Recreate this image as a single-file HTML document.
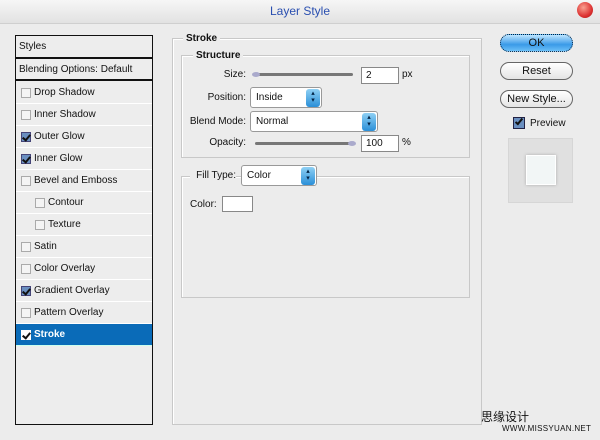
<!DOCTYPE html>
<html><head><meta charset="utf-8"><style>
*{margin:0;padding:0;box-sizing:border-box}
body{width:600px;height:440px;background:#ececec;font-family:"Liberation Sans",Arial,sans-serif;font-size:10px;color:#111;position:relative;overflow:hidden}
.a{position:absolute}
#title{left:0;top:0;width:600px;height:24px;background:linear-gradient(#f6f6f6,#e2e2e2);border-bottom:1px solid #cfcfcf;text-align:center;line-height:22px;font-size:12px;color:#2a4fb0}
#close{left:577px;top:2px;width:16px;height:16px;border-radius:50%;background:radial-gradient(circle at 40% 35%,#f9a090,#d33 60%,#a11)}
#list{left:15px;top:35px;width:138px;height:390px;border:1px solid #111;background:#ededed}
.row{position:absolute;left:0;width:136px;height:22px;border-bottom:1px solid #fff;line-height:21px;padding-left:18px}
.cb{position:absolute;left:5px;top:6px;width:10px;height:10px;border:1px solid #aaa;background:#f4f4f4}
.cb.on{border-color:#447;background:#6a8fc0}
.cb.on::after{content:"";position:absolute;left:2px;top:0;width:3px;height:6px;border:solid #111;border-width:0 2px 2px 0;transform:rotate(40deg)}
.box{position:absolute;border:1px solid #c8c8c8;box-shadow:inset 1px 1px 0 #fff}
.lbl{position:absolute;font-size:10px;text-align:right}
.inp{position:absolute;background:#fff;border:1px solid #888;height:17px;line-height:15px;padding-left:4px}
.sel{position:absolute;background:#fff;border:1px solid #999;border-radius:3px;height:21px;line-height:19px;padding-left:5px}
.sel::after{content:"▴\A▾";white-space:pre;position:absolute;right:1px;top:1px;width:14px;height:17px;border-radius:3px;background:linear-gradient(#8fd0f4,#2a8fd8);font-size:7px;line-height:7px;text-align:center;color:#024;padding-top:1px}
.slider{position:absolute;height:3px;background:#777;border-radius:2px}
.knob{position:absolute;width:8px;height:5px;border-radius:50%;background:#aac}
.btn{position:absolute;left:500px;width:73px;height:18px;border:1px solid #666;border-radius:9px;background:linear-gradient(#fff,#e4e4e4);text-align:center;line-height:16px;font-size:11px}
.h{position:absolute;font-weight:bold;font-size:10px;background:#ececec;padding:0 3px}
</style></head><body>
<div id="title" class="a">Layer Style</div>
<div id="close" class="a"></div>

<div id="list" class="a">
<div class="row" style="top:0;height:23px;padding-left:3px;border-bottom:2px solid #111">Styles</div>
<div class="row" style="top:23px;padding-left:3px;border-bottom:2px solid #111">Blending Options: Default</div>
<div class="row" style="top:46px"><span class="cb"></span>Drop Shadow</div>
<div class="row" style="top:68px"><span class="cb"></span>Inner Shadow</div>
<div class="row" style="top:90px"><span class="cb on"></span>Outer Glow</div>
<div class="row" style="top:112px"><span class="cb on"></span>Inner Glow</div>
<div class="row" style="top:134px"><span class="cb"></span>Bevel and Emboss</div>
<div class="row" style="top:156px;padding-left:32px"><span class="cb" style="left:19px"></span>Contour</div>
<div class="row" style="top:178px;padding-left:32px"><span class="cb" style="left:19px"></span>Texture</div>
<div class="row" style="top:200px"><span class="cb"></span>Satin</div>
<div class="row" style="top:222px"><span class="cb"></span>Color Overlay</div>
<div class="row" style="top:244px"><span class="cb on"></span>Gradient Overlay</div>
<div class="row" style="top:266px"><span class="cb"></span>Pattern Overlay</div>
<div class="row" style="top:288px;background:#0a6bb8;color:#fff;font-weight:bold;border-bottom:1px solid #cfe"><span class="cb on" style="background:#fff;border-color:#fff"></span>Stroke</div>
</div>

<div class="box" style="left:172px;top:38px;width:310px;height:387px"></div>
<div class="h" style="left:183px;top:33px">Stroke</div>
<div class="box" style="left:181px;top:55px;width:289px;height:103px"></div>
<div class="h" style="left:193px;top:50px">Structure</div>
<div class="lbl" style="left:200px;top:69px;width:46px">Size:</div>
<div class="slider" style="left:253px;top:73px;width:100px"></div>
<div class="knob" style="left:252px;top:72px"></div>
<div class="inp" style="left:361px;top:67px;width:38px">2</div>
<div class="a" style="left:402px;top:69px">px</div>
<div class="lbl" style="left:190px;top:92px;width:56px">Position:</div>
<div class="sel" style="left:250px;top:87px;width:72px">Inside</div>
<div class="lbl" style="left:180px;top:116px;width:66px">Blend Mode:</div>
<div class="sel" style="left:250px;top:111px;width:128px">Normal</div>
<div class="lbl" style="left:190px;top:137px;width:56px">Opacity:</div>
<div class="slider" style="left:255px;top:142px;width:100px"></div>
<div class="knob" style="left:348px;top:141px"></div>
<div class="inp" style="left:361px;top:135px;width:38px">100</div>
<div class="a" style="left:402px;top:137px">%</div>

<div class="box" style="left:181px;top:176px;width:289px;height:122px"></div>
<div class="lbl" style="left:190px;top:170px;width:46px;background:#ececec">Fill Type:</div>
<div class="sel" style="left:241px;top:165px;width:76px">Color</div>
<div class="a" style="left:190px;top:199px">Color:</div>
<div class="a" style="left:222px;top:196px;width:31px;height:16px;background:#fff;border:1px solid #888"></div>

<div class="btn" style="top:34px;border:1px dotted #024;background:linear-gradient(#bfe6ff,#3a9ae8 60%,#6cc0f8)">OK</div>
<div class="btn" style="top:62px">Reset</div>
<div class="btn" style="top:90px">New Style...</div>
<div class="a" style="left:513px;top:117px;width:12px;height:12px;border:1px solid #224;background:#6a8fc0"></div>
<div class="a" style="left:517px;top:117px;width:4px;height:8px;border:solid #111;border-width:0 2px 2px 0;transform:rotate(40deg)"></div>
<div class="a" style="left:530px;top:118px">Preview</div>
<div class="a" style="left:508px;top:138px;width:65px;height:65px;background:#e0e0e0;border:1px solid #d6d6d6"></div>
<div class="a" style="left:526px;top:155px;width:30px;height:30px;background:#f2f6f6;border:1px solid #fff;box-shadow:0 0 3px #aaa"></div>

<div class="a" style="left:481px;top:408px;font-size:12px;font-family:'Liberation Sans','Noto Sans CJK SC',sans-serif">思缘设计</div>
<div class="a" style="left:502px;top:424px;font-size:8px;letter-spacing:0.3px">WWW.MISSYUAN.NET</div>
</body></html>
